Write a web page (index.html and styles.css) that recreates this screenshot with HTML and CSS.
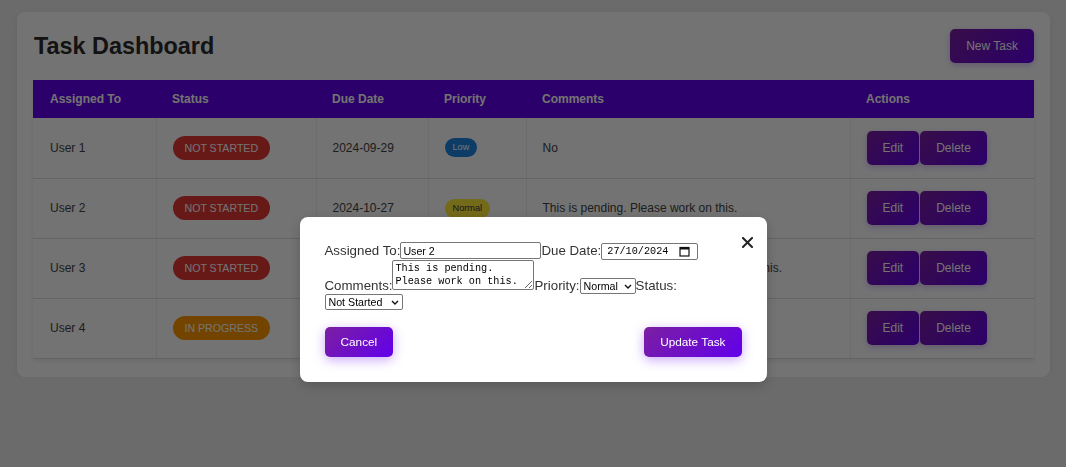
FILE: index.html
```html
<!DOCTYPE html>
<html lang="en">
<head>
<meta charset="utf-8">
<title>Task Dashboard</title>
<link rel="stylesheet" href="styles.css">
</head>
<body>
<div class="container">
  <div class="header">
    <h1 class="title">Task Dashboard</h1>
    <button class="btn">New Task</button>
  </div>
  <table class="tasks">
    <colgroup>
      <col class="c-user"><col class="c-status"><col class="c-date"><col class="c-prio"><col class="c-comments"><col class="c-actions">
    </colgroup>
    <thead>
      <tr><th>Assigned To</th><th>Status</th><th>Due Date</th><th>Priority</th><th>Comments</th><th>Actions</th></tr>
    </thead>
    <tbody>
      <tr>
        <td>User 1</td>
        <td><span class="status status-not">Not Started</span></td>
        <td>2024-09-29</td>
        <td><span class="prio prio-low">Low</span></td>
        <td>No</td>
        <td><div class="actions"><button class="btn">Edit</button><button class="btn">Delete</button></div></td>
      </tr>
      <tr>
        <td>User 2</td>
        <td><span class="status status-not">Not Started</span></td>
        <td>2024-10-27</td>
        <td><span class="prio prio-normal">Normal</span></td>
        <td>This is pending. Please work on this.</td>
        <td><div class="actions"><button class="btn">Edit</button><button class="btn">Delete</button></div></td>
      </tr>
      <tr>
        <td>User 3</td>
        <td><span class="status status-not">Not Started</span></td>
        <td>2024-10-30</td>
        <td><span class="prio prio-high">High</span></td>
        <td>Needs more details. Please follow up on this.</td>
        <td><div class="actions"><button class="btn">Edit</button><button class="btn">Delete</button></div></td>
      </tr>
      <tr>
        <td>User 4</td>
        <td><span class="status status-progress">In Progress</span></td>
        <td>2024-11-05</td>
        <td><span class="prio prio-normal">Normal</span></td>
        <td>Currently working on it. Should finish soon</td>
        <td><div class="actions"><button class="btn">Edit</button><button class="btn">Delete</button></div></td>
      </tr>
    </tbody>
  </table>
</div>

<div class="overlay">
  <div class="modal">
    <button class="close" aria-label="Close"><svg width="11" height="11" viewBox="0 0 11 11"><path d="M1 1L10 10M10 1L1 10" stroke="#222" stroke-width="2" stroke-linecap="square"/></svg></button>
    <form class="form"><label>Assigned To:</label><input class="field-text" type="text" value="User 2"><label>Due Date:</label><span class="field-date"><input class="date-input" type="text" value="27/10/2024"><svg class="cal" width="11" height="11" viewBox="0 0 11 11"><rect x="1" y="1.5" width="9" height="8.5" fill="none" stroke="#111" stroke-width="1.2"/><rect x="1" y="1.5" width="9" height="2" fill="#111"/></svg></span><label>Comments:</label><textarea class="field-area">This is pending. Please work on this.</textarea><label>Priority:</label><span class="select-wrap"><select class="field-select sel-prio"><option>Low</option><option selected>Normal</option><option>High</option></select><svg class="chev" width="8" height="5" viewBox="0 0 8 5"><path d="M1 1L4 4L7 1" fill="none" stroke="#111" stroke-width="1.4"/></svg></span><label>Status:</label><span class="select-wrap"><select class="field-select sel-status"><option selected>Not Started</option><option>In Progress</option><option>Completed</option></select><svg class="chev" width="8" height="5" viewBox="0 0 8 5"><path d="M1 1L4 4L7 1" fill="none" stroke="#111" stroke-width="1.4"/></svg></span></form>
    <div class="modal-actions">
      <button class="btn btn-modal">Cancel</button>
      <button class="btn btn-modal">Update Task</button>
    </div>
  </div>
</div>
</body>
</html>
```

FILE: styles.css
```css
* { box-sizing: border-box; }

body {
  margin: 0;
  padding: 12px 16px 0 17px;
  background: #eeeeee;
  font-family: "Liberation Sans", Arial, sans-serif;
}

.container {
  background: #ffffff;
  border-radius: 8px;
  padding: 17px 16px 18px;
  box-shadow: 0 2px 8px rgba(0, 0, 0, 0.08);
}

.header {
  display: flex;
  justify-content: space-between;
  align-items: center;
  margin-bottom: 17px;
}

.title {
  margin: 0 0 0 1px;
  font-size: 23.4px;
  font-weight: bold;
  color: #2a2a2a;
}

.btn {
  background: linear-gradient(135deg, #7b1fa2, #6200ea);
  color: #fff;
  border: none;
  border-radius: 5px;
  font-family: "Liberation Sans", Arial, sans-serif;
  font-size: 12px;
  line-height: 14px;
  padding: 10px 16px;
  box-shadow: 0 2px 6px rgba(98, 0, 234, 0.25);
  cursor: pointer;
}

.tasks {
  width: 100%;
  border-collapse: collapse;
  table-layout: fixed;
  box-shadow: 0 2px 5px rgba(0, 0, 0, 0.08);
}

.c-user { width: 123px; }
.c-status { width: 160px; }
.c-date { width: 112px; }
.c-prio { width: 98px; }
.c-comments { width: 324px; }
.c-actions { width: 184px; }

.tasks th {
  background: #6200ea;
  color: #fff;
  text-align: left;
  font-size: 12px;
  line-height: 14px;
  font-weight: bold;
  padding: 12px 16px;
}

.tasks th:first-child { padding-left: 17px; }

.tasks td {
  height: 60px;
  padding: 0 16px;
  font-size: 12px;
  color: #444;
  border-bottom: 1px solid #dddddd;
  border-left: 1px solid #f0f0f0;
  white-space: nowrap;
}

.tasks td:first-child { border-left: none; padding-left: 17px; }

.status {
  display: inline-block;
  padding: 6px 12px;
  border-radius: 12px;
  font-size: 10.6px;
  line-height: 12px;
  color: #fff;
  text-transform: uppercase;
}

.status-not { background: #e53935; }
.status-progress { background: #ff9800; }

.prio {
  display: inline-block;
  padding: 3px 8px;
  border-radius: 10px;
  font-size: 9.2px;
  line-height: 13px;
}

.prio-low { background: #1e88e5; color: #fff; }
.prio-normal { background: #ffeb3b; color: #333; }
.prio-high { background: #e53935; color: #fff; }

.actions {
  display: flex;
  gap: 1px;
}

/* Modal */
.overlay {
  position: fixed;
  inset: 0;
  background: rgba(0, 0, 0, 0.55);
  display: flex;
  justify-content: center;
  align-items: flex-start;
  padding-top: 217px;
}

.modal {
  position: relative;
  width: 467px;
  padding: 25px;
  background: #fff;
  border-radius: 8px;
  box-shadow: 0 4px 14px rgba(0, 0, 0, 0.2);
}

.close {
  position: absolute;
  top: 20px;
  right: 14px;
  width: 11px;
  height: 11px;
  padding: 0;
  border: none;
  background: none;
  display: flex;
  cursor: pointer;
}

.form {
  margin: 0;
  font-size: 13.3px;
  line-height: 15px;
  color: #333;
}

.field-text {
  width: 141px;
  height: 17px;
  margin: 0;
  padding: 0 2px;
  border: 1px solid #767676;
  border-radius: 2px;
  font-family: "Liberation Sans", Arial, sans-serif;
  font-size: 10.67px;
  color: #000;
}

.field-date {
  display: inline-flex;
  align-items: center;
  width: 97px;
  height: 17px;
  border: 1px solid #767676;
  border-radius: 2px;
  padding: 0 7px 0 5px;
  vertical-align: 1px;
}

.date-input {
  width: 68px;
  height: 15px;
  border: none;
  padding: 0;
  margin: 0;
  outline: none;
  font-family: "Liberation Mono", "DejaVu Sans Mono", monospace;
  font-size: 10.2px;
  color: #000;
  background: transparent;
}

.cal { margin-left: auto; flex: none; }

.field-area {
  width: 142px;
  height: 30px;
  margin: 0;
  padding: 1px 2px;
  border: 1px solid #767676;
  border-radius: 2px;
  font-family: "Liberation Mono", "DejaVu Sans Mono", monospace;
  font-size: 10.2px;
  line-height: 13px;
  color: #000;
  overflow: hidden;
}

.select-wrap {
  position: relative;
  display: inline-block;
}

.field-select {
  appearance: none;
  -webkit-appearance: none;
  height: 16px;
  margin: 0;
  padding: 0 12px 0 3px;
  border: 1px solid #767676;
  border-radius: 2px;
  background: #fff;
  font-family: "Liberation Sans", Arial, sans-serif;
  font-size: 10.67px;
  color: #000;
}

.chev {
  position: absolute;
  right: 4px;
  top: 6px;
  pointer-events: none;
}

.sel-prio { width: 56px; }
.sel-status { width: 78px; }

.modal-actions {
  display: flex;
  justify-content: space-between;
  margin-top: 17px;
}

.btn-modal {
  font-size: 11.8px;
  padding: 8px 16px;
  border-radius: 5px;
  box-shadow: 0 3px 12px rgba(106, 0, 240, 0.35);
}
```
